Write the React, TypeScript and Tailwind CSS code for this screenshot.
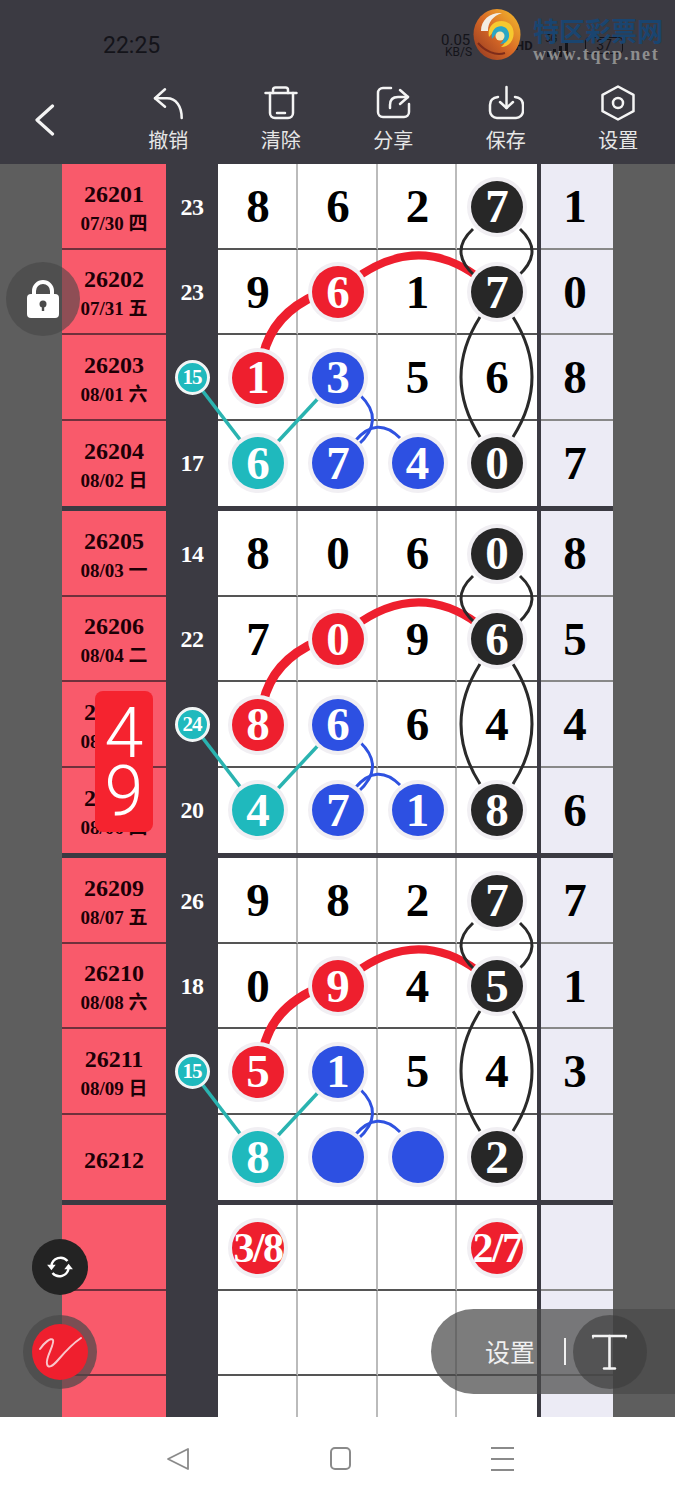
import type { ReactNode } from "react";

type Tone = "red" | "blue" | "teal" | "black";
type Ball = { v: string; tone?: Tone };

const toneBg: Record<Tone, string> = {
  red: "bg-[#ee1f2e]",
  blue: "bg-[#2d50e2]",
  teal: "bg-[#1fb9bd]",
  black: "bg-[#272727]",
};

const serif = "[font-family:'Liberation_Serif','Noto_Sans_CJK_SC',serif]";
const sans = "[font-family:'Roboto','Noto_Sans_CJK_SC',sans-serif]";

type RowData = {
  issue?: string;
  date?: string;
  sum?: string;
  badge?: string;
  balls: Ball[];
  last?: string;
};

const n = (v: string): Ball => ({ v });
const r = (v: string): Ball => ({ v, tone: "red" });
const b = (v: string): Ball => ({ v, tone: "blue" });
const t = (v: string): Ball => ({ v, tone: "teal" });
const k = (v: string): Ball => ({ v, tone: "black" });

const blocks: RowData[][] = [
  [
    { issue: "26201", date: "07/30 四", sum: "23", balls: [n("8"), n("6"), n("2"), k("7")], last: "1" },
    { issue: "26202", date: "07/31 五", sum: "23", balls: [n("9"), r("6"), n("1"), k("7")], last: "0" },
    { issue: "26203", date: "08/01 六", badge: "15", balls: [r("1"), b("3"), n("5"), n("6")], last: "8" },
    { issue: "26204", date: "08/02 日", sum: "17", balls: [t("6"), b("7"), b("4"), k("0")], last: "7" },
  ],
  [
    { issue: "26205", date: "08/03 一", sum: "14", balls: [n("8"), n("0"), n("6"), k("0")], last: "8" },
    { issue: "26206", date: "08/04 二", sum: "22", balls: [n("7"), r("0"), n("9"), k("6")], last: "5" },
    { issue: "26207", date: "08/05 三", badge: "24", balls: [r("8"), b("6"), n("6"), n("4")], last: "4" },
    { issue: "26208", date: "08/06 四", sum: "20", balls: [t("4"), b("7"), b("1"), k("8")], last: "6" },
  ],
  [
    { issue: "26209", date: "08/07 五", sum: "26", balls: [n("9"), n("8"), n("2"), k("7")], last: "7" },
    { issue: "26210", date: "08/08 六", sum: "18", balls: [n("0"), r("9"), n("4"), k("5")], last: "1" },
    { issue: "26211", date: "08/09 日", badge: "15", balls: [r("5"), b("1"), n("5"), n("4")], last: "3" },
    { issue: "26212", balls: [t("8"), b(""), b(""), k("2")] },
  ],
];

const colWidths = ["w-[80px]", "w-[80px]", "w-[79px]", "w-[80px]"];

function Circle({ ball }: { ball: Ball }) {
  if (!ball.tone) return <span className="text-[47px] font-bold leading-none text-black">{ball.v}</span>;
  const small = ball.v.length > 1;
  return (
    <span
      className={`relative z-10 flex h-[52px] w-[52px] items-center justify-center whitespace-nowrap rounded-full font-bold leading-none text-white shadow-[0_0_0_4px_#f1eff3] ${small ? "text-[42px] tracking-[-1.5px]" : "text-[47px]"} ${toneBg[ball.tone]}`}
    >
      {ball.v}
    </span>
  );
}

function Row({ row, noLine }: { row: RowData; noLine?: boolean }) {
  // the padding keeps the content centred once the 2px rule is drawn
  const line = noLine ? "" : "border-b-2 pt-[2px]";
  return (
    <div className={`flex h-[85.5px] w-[551px] shrink-0 ${serif}`}>
      <div
        className={`flex w-[104px] flex-col items-center justify-center bg-[#f95a6b] font-bold text-[#1d0006] border-[#70303c] ${noLine ? "pt-[6px]" : "border-b-2 pt-[6px]"}`}
      >
        {row.issue && <span className="text-[24px] leading-[30px]">{row.issue}</span>}
        {row.date && <span className="text-[19px] leading-[30px]">{row.date}</span>}
      </div>
      <div className="flex w-[52px] items-center justify-center bg-[#3b3a42] text-[24px] font-bold tracking-[-0.5px] text-white">
        {row.sum}
        {row.badge && (
          <span className="relative z-10 flex h-[35px] w-[35px] items-center justify-center rounded-full border-[3px] border-[#f1f5f5] bg-[#1fb9bd] text-[21px] leading-none tracking-[-1px]">
            {row.badge}
          </span>
        )}
      </div>
      {row.balls.map((ball, i) => (
        <div
          key={i}
          className={`flex items-center justify-center bg-white border-[#555] ${colWidths[i]} ${line} ${i < 3 ? "border-r-2 border-r-[#bbbbbb] pl-[2px]" : ""}`}
        >
          <Circle ball={ball} />
        </div>
      ))}
      <div className="w-[4px] bg-[#3b3a42]" />
      <div
        className={`flex w-[72px] items-center justify-center bg-[#ecebf5] pr-[4px] text-[47px] font-bold leading-none text-black border-[#888] ${line}`}
      >
        {row.last}
      </div>
    </div>
  );
}

// Connector lines, drawn in page x and block-relative y
function Links() {
  return (
    <svg className="absolute left-[-62px] top-0 h-[342px] w-[675px]" viewBox="0 0 675 342" fill="none">
      <path d="M263 192 Q272 150 318 130" stroke="#ee1f2e" strokeWidth="9" />
      <path d="M352 117 Q417 68 478 113" stroke="#ee1f2e" strokeWidth="8" />
      <g stroke="#2a2a2a" strokeWidth="3">
        <path d="M473 65 Q448 88 475 112" />
        <path d="M520 65 Q545 88 518 112" />
        <path d="M480 153 Q442 213 480 273" />
        <path d="M513 153 Q551 213 513 273" />
      </g>
      <g stroke="#2ab3b0" strokeWidth="3.5">
        <line x1="192" y1="213" x2="258" y2="299" />
        <line x1="338" y1="213" x2="258" y2="299" />
      </g>
      <g stroke="#2f52e0" strokeWidth="3">
        <path d="M360 231 Q386 256 358 281" />
        <path d="M355 277 Q377 251 400 274" />
      </g>
    </svg>
  );
}

function ToolButton({ label, children }: { label: string; children: ReactNode }) {
  return (
    <div className="flex w-[112.5px] flex-col items-center">
      <svg
        className="h-[36px] w-[36px]"
        viewBox="0 0 36 36"
        fill="none"
        stroke="#f4f4f4"
        strokeWidth="2.5"
        strokeLinecap="round"
        strokeLinejoin="round"
      >
        {children}
      </svg>
      <span className={`mt-[7px] text-[20px] leading-[26px] text-[#e6e6e6] ${sans}`}>{label}</span>
    </div>
  );
}

function Logo() {
  return (
    <svg className="absolute left-[473px] top-[9px] h-[51px] w-[48px]" viewBox="0 0 48 51">
      <defs>
        <linearGradient id="logoBase" x1="0.1" y1="0.9" x2="0.9" y2="0.1">
          <stop offset="0" stopColor="#9c3f22" />
          <stop offset="0.5" stopColor="#d96a26" />
          <stop offset="1" stopColor="#efb02c" />
        </linearGradient>
      </defs>
      <ellipse cx="24" cy="25.5" rx="23.5" ry="25.5" fill="url(#logoBase)" />
      <path d="M8 22 C8 10 18 3 29 4 C20 7 15 13 15 22 Z" fill="#f2ede4" />
      <path d="M16 28 C13 14 28 8 37 15 C44 22 41 38 28 38 C36 32 35 20 27 20 C21 20 19 25 16 28 Z" fill="#f6c92f" />
      <path d="M19 30 C17 20 26 14 33 19 C39 25 36 35 27 35 C32 31 32 24 27 23 C23 23 22 27 19 30 Z" fill="#2aa6c4" />
      <circle cx="27" cy="27" r="4.5" fill="#f3e7b6" />
      <path d="M5 34 C12 42 22 47 32 44" stroke="#7d2c1a" strokeWidth="2" fill="none" />
    </svg>
  );
}

function StatusBar() {
  return (
    <div className="flex h-[80px] items-center pl-[103px] pt-[10px] text-[#14141a] [font-family:'Roboto',sans-serif]">
      <span className="w-[338px] text-[23px] leading-none">22:25</span>
      <div className="flex w-[74px] flex-col items-start">
        <span className="text-[15px] leading-[14px]">0.05</span>
        <span className="pl-[4px] text-[12px] leading-[11px]">KB/S</span>
      </div>
      <span className="w-[30px] text-[13px] font-bold leading-none">HD</span>
      <div className="flex w-[40px] flex-col items-start">
        <span className="text-[10px] leading-[9px]">5G</span>
        <span className="flex items-end gap-[3px] pl-[2px]">
          <i className="h-[5px] w-[3px] bg-[#14141a]" />
          <i className="h-[8px] w-[3px] bg-[#14141a]" />
          <i className="h-[11px] w-[3px] bg-[#14141a]" />
          <i className="h-[14px] w-[3px] bg-[#14141a]" />
        </span>
      </div>
      <span className="flex h-[17px] w-[38px] items-center justify-center rounded-[4px] border border-[#14141a] text-[14px] leading-none">
        37
      </span>
    </div>
  );
}

const blankRow: RowData = { balls: [n(""), n(""), n(""), n("")] };

export default function App() {
  return (
    <div className="relative flex h-[1500px] w-[675px] flex-col overflow-hidden bg-white">
      <header className="h-[164px] shrink-0 bg-[#3b3a42]">
        <StatusBar />
        <div className="flex h-[84px] items-start pt-[5px]">
          <div className="flex h-[70px] w-[112px] items-center pl-[35px]">
            <svg className="h-[32px] w-[20px]" viewBox="0 0 20 32" fill="none" stroke="#f4f4f4" strokeWidth="3.2" strokeLinecap="round" strokeLinejoin="round">
              <path d="M17.5 2 L2 16 L17.5 30" />
            </svg>
          </div>
          <ToolButton label="撤销">
            <path d="M15 4.3 L5 13.3 L15 21.7" />
            <path d="M5 13.3 H17 C26 13.3 31.7 21 31.7 33" />
          </ToolButton>
          <ToolButton label="清除">
            <path d="M2.5 8 H33.5" />
            <path d="M10 8 V5 Q10 2.5 12.5 2.5 H22.5 Q25 2.5 25 5 V8" />
            <path d="M7 8 V28 a5 5 0 0 0 5 5 H25 a5 5 0 0 0 5 -5 V8" />
            <path d="M14 28 H22" />
          </ToolButton>
          <ToolButton label="分享">
            <path d="M16 3 H8 a5 5 0 0 0 -5 5 V27 a5 5 0 0 0 5 5 H29 a5 5 0 0 0 5 -5 V19" />
            <path d="M15 23 V20 Q15 12 23 12 H33" />
            <path d="M25 5 L33 12 L25 19" />
          </ToolButton>
          <ToolButton label="保存">
            <path d="M10 12 Q2 13 2 20 V26 a7 7 0 0 0 7 7 H28 a7 7 0 0 0 7 -7 V20 Q35 13 27 12" />
            <path d="M18.5 2 V23" />
            <path d="M12 17 L18.5 23 L25 17" />
          </ToolButton>
          <ToolButton label="设置">
            <path d="M18 1.5 L33.5 9.8 V26.2 L18 34.5 L2.5 26.2 V9.8 Z" />
            <circle cx="18" cy="18" r="5" />
          </ToolButton>
        </div>
      </header>

      <main className="flex h-[1253px] shrink-0 flex-col overflow-hidden bg-[#5e5e5e] pl-[62px]">
        {blocks.map((rows, i) => (
          <div key={i} className="shrink-0">
            <div className="relative">
              {rows.map((row, j) => (
                <Row key={j} row={row} noLine={j === 3} />
              ))}
              <Links />
            </div>
            <div className="h-[5px] w-[551px] bg-[#3b3a42]" />
          </div>
        ))}
        <Row row={{ balls: [r("3/8"), n(""), n(""), r("2/7")] }} />
        <Row row={blankRow} />
        <Row row={blankRow} />
      </main>

      <nav className="flex h-[83px] shrink-0 items-center bg-white pl-[97px]">
        <div className="flex w-[162px] justify-center">
          <svg className="h-[24px] w-[24px]" viewBox="0 0 24 24" fill="none" stroke="#8a8a8a" strokeWidth="1.8" strokeLinejoin="round">
            <path d="M2 12 L22 2 V22 Z" />
          </svg>
        </div>
        <div className="flex w-[162px] justify-center">
          <span className="h-[23px] w-[21px] rounded-[5px] border-2 border-[#8a8a8a]" />
        </div>
        <div className="flex w-[162px] flex-col items-center gap-[9px]">
          <span className="h-[2px] w-[23px] bg-[#8a8a8a]" />
          <span className="h-[2px] w-[23px] bg-[#8a8a8a]" />
          <span className="h-[2px] w-[23px] bg-[#8a8a8a]" />
        </div>
      </nav>

      {/* floating controls and watermark */}
      <Logo />
      <div className="absolute left-[533px] top-[15px] flex flex-col">
        <span className="text-[26px] font-bold leading-[30px] text-[#1a4570] [font-family:'Noto_Sans_CJK_SC',sans-serif]">特区彩票网</span>
        <span className="text-[18px] font-bold leading-[18px] tracking-[1.8px] text-[#8e8e8e] [font-family:'Liberation_Serif',serif]">www.tqcp.net</span>
      </div>

      <div className="absolute left-[6px] top-[262px] flex h-[74px] w-[74px] items-center justify-center rounded-full bg-[rgba(70,70,70,0.6)]">
        <svg className="h-[40px] w-[34px]" viewBox="0 0 34 40">
          <path d="M8 18 V12 a9 9 0 0 1 18 0 V18" fill="none" stroke="#fff" strokeWidth="4" />
          <rect x="1" y="15" width="32" height="24" rx="4" fill="#fff" />
          <circle cx="17" cy="25" r="3.5" fill="#4a4a4a" />
          <rect x="15.8" y="26" width="2.4" height="6" fill="#4a4a4a" />
        </svg>
      </div>

      <div className={`absolute left-[95px] top-[691px] flex h-[141px] w-[58px] flex-col items-center justify-center rounded-[8px] bg-[#f5232f] text-[70px] font-light leading-[58px] text-white ${sans}`}>
        <span>4</span>
        <span>9</span>
      </div>

      <div className="absolute left-[32px] top-[1239px] flex h-[56px] w-[56px] items-center justify-center rounded-full bg-[#232323]">
        <svg className="h-[30px] w-[30px]" viewBox="0 0 28 28" fill="none" stroke="#fff" strokeWidth="2.2">
          <path d="M6 13 A8.5 8.5 0 0 1 21 8.5" />
          <path d="M22 15 A8.5 8.5 0 0 1 7 19.5" />
          <path d="M2 12 H10 L6 17 Z" fill="#fff" stroke="none" />
          <path d="M18 16 H26 L22 11 Z" fill="#fff" stroke="none" />
        </svg>
      </div>

      <div className="absolute left-[23px] top-[1315px] flex h-[74px] w-[74px] items-center justify-center rounded-full bg-[rgba(74,74,74,0.72)]">
        <div className="flex h-[56px] w-[56px] items-center justify-center rounded-full bg-[#ef1f2e]">
          <svg className="h-[56px] w-[56px]" viewBox="0 0 56 56" fill="none" stroke="#f9c6cb" strokeWidth="2" strokeLinecap="round">
            <path d="M8 25 C12 19 19 13 21 16 C23 20 13 34 15 40 C16 45 21 42 26 36 C32 29 40 20 49 14" />
          </svg>
        </div>
      </div>

      <div className={`absolute left-[431px] top-[1309px] flex h-[85px] w-[244px] items-center rounded-l-full bg-[rgba(74,74,74,0.72)] pl-[54px] text-white ${sans}`}>
        <span className="mt-[3px] w-[79px] text-[25px] leading-none text-[#f0f0f0]">设置</span>
        <span className="h-[27px] w-[1.5px] bg-[#f0f0f0]" />
        <div className="ml-[7px] flex h-[74px] w-[74px] items-center justify-center rounded-full bg-[rgba(60,60,60,0.6)]">
          <svg className="h-[37px] w-[37px]" viewBox="0 0 37 37" fill="none" stroke="#f4f4f4" strokeLinecap="round">
            <path d="M2 3 H35" strokeWidth="2.4" />
            <path d="M2 3 V5 M35 3 V5" strokeWidth="1.5" />
            <path d="M18.5 3 V35" strokeWidth="2.6" />
            <path d="M13 35.5 H24" strokeWidth="2.4" />
          </svg>
        </div>
      </div>
    </div>
  );
}
